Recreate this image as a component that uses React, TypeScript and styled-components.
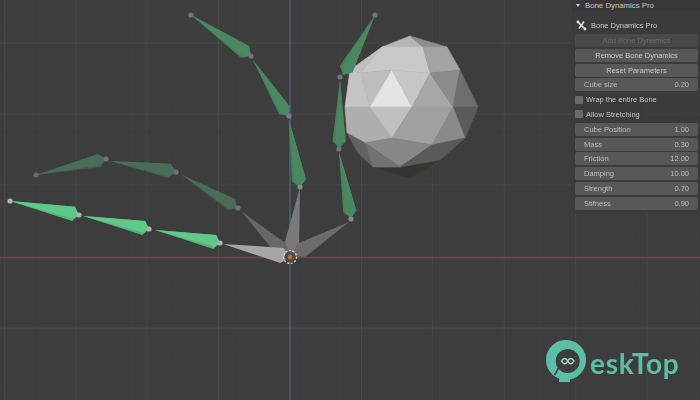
import React from 'react';
import styled, { createGlobalStyle } from 'styled-components';

const GlobalStyle = createGlobalStyle`
  html, body {
    margin: 0;
    padding: 0;
    background: #3d3d3d;
    overflow: hidden;
  }
`;

const Viewport = styled.div`
  position: relative;
  width: 700px;
  height: 400px;
  overflow: hidden;
  background: #3d3d3d;
  font-family: 'Liberation Sans', Arial, sans-serif;
`;

const Scene = styled.svg`
  display: block;
  width: 700px;
  height: 400px;
`;

const SidePanel = styled.aside`
  position: absolute;
  top: 0;
  right: 0;
  width: 129px;
  height: 214px;
  display: flex;
  flex-direction: column;
  background: rgba(58, 58, 58, 0.7);
  color: #c0c0c0;
  font-size: 7.5px;
  filter: blur(0.45px);
`;

const PanelHeader = styled.div`
  display: flex;
  align-items: center;
  gap: 5px;
  height: 11px;
  padding-left: 5px;
  background: #383838;
  color: #c8c8c8;
  font-size: 7.8px;
`;

const Arrow = styled.span`
  width: 0;
  height: 0;
  border-left: 2px solid transparent;
  border-right: 2px solid transparent;
  border-top: 3px solid #cfcfcf;
`;

const PanelBody = styled.div`
  display: flex;
  flex-direction: column;
  padding: 8px 0 0 4px;
`;

const TitleRow = styled.div`
  display: flex;
  align-items: center;
  gap: 4px;
  height: 12px;
  margin: 0 0 3px 1px;
  color: #cbcbcb;
  font-size: 7.5px;
`;

const ActionButton = styled.div<{ $disabled?: boolean }>`
  display: flex;
  align-items: center;
  justify-content: center;
  width: 123px;
  height: 13px;
  margin-bottom: 1.8px;
  border-radius: 2px;
  background: ${({ $disabled }) => ($disabled ? '#484848' : '#585858')};
  color: ${({ $disabled }) => ($disabled ? '#6c6c6c' : '#cacaca')};
`;

const NumberField = styled.div`
  display: flex;
  align-items: center;
  justify-content: space-between;
  box-sizing: border-box;
  width: 123px;
  height: 13px;
  margin-bottom: 1.8px;
  padding: 0 9px;
  border-radius: 2px;
  background: #585858;
  color: #bdbdbd;
`;

const CheckRow = styled.div`
  display: flex;
  align-items: center;
  gap: 3px;
  height: 13px;
  margin-bottom: 1.8px;
  color: #c4c4c4;
`;

const CheckBox = styled.span`
  width: 8px;
  height: 8px;
  border-radius: 1px;
  background: #6a6a6a;
`;

const WatermarkLogo = styled.div`
  position: absolute;
  left: 545px;
  top: 339px;
  display: flex;
  align-items: flex-start;
  color: #5bbfa8;
`;

const LogoMark = styled.svg`
  width: 44px;
  height: 46px;
`;

const LogoText = styled.span`
  margin: 8px 0 0 1px;
  font-family: Lato, 'Open Sans', sans-serif;
  font-size: 28px;
  font-weight: 700;
  letter-spacing: 0.7px;
  line-height: 32px;
  filter: blur(0.3px);
`;

type Bone = {
  from: [number, number];
  to: [number, number];
  width?: number;
  ratio?: number;
};

// kite shape: the widest point sits a fixed way along each bone
const boneShape = ({ from, to, width = 12, ratio = 0.9 }: Bone) => {
  const dx = to[0] - from[0];
  const dy = to[1] - from[1];
  const len = Math.hypot(dx, dy);
  const nx = -dy / len;
  const ny = dx / len;
  const mx = from[0] + dx * ratio;
  const my = from[1] + dy * ratio;
  const half = width * 0.55;
  const a = `${mx + nx * half},${my + ny * half}`;
  const b = `${mx - nx * half},${my - ny * half}`;
  const inner = `${mx + nx * half * 0.7},${my + ny * half * 0.7}`;
  return {
    outline: `${from[0]},${from[1]} ${a} ${to[0]},${to[1]} ${b}`,
    face: `${from[0]},${from[1]} ${inner} ${to[0]},${to[1]} ${b}`,
  };
};

const brightBones: Bone[] = [
  { from: [10, 201], to: [79, 215], width: 13, ratio: 0.92 },
  { from: [83, 216], to: [149, 229], width: 13, ratio: 0.92 },
  { from: [155, 230], to: [220, 243], width: 13, ratio: 0.92 },
];

const fadedBones: Bone[] = [
  { from: [36, 175], to: [106, 159], width: 12 },
  { from: [110, 161], to: [176, 172], width: 13 },
  { from: [182, 175], to: [237, 208], width: 12 },
];

const greenBones: Bone[] = [
  { from: [191, 15], to: [251, 56], width: 13 },
  { from: [253, 60], to: [288, 116], width: 12 },
  { from: [289, 120], to: [300, 187], width: 13 },
  { from: [375, 15], to: [343, 75], width: 13 },
  { from: [340, 80], to: [339, 148], width: 12 },
  { from: [339, 152], to: [351, 218], width: 12 },
];

const rootBones: { bone: Bone; fill: string }[] = [
  { bone: { from: [242, 212], to: [290, 257], width: 13, ratio: 0.8 }, fill: '#686868' },
  { bone: { from: [300, 187], to: [290, 257], width: 13, ratio: 0.8 }, fill: '#7a7a7a' },
  { bone: { from: [349, 222], to: [290, 257], width: 14, ratio: 0.8 }, fill: '#6c6c6c' },
  { bone: { from: [223, 244], to: [290, 257], width: 14, ratio: 0.88 }, fill: '#a6a6a6' },
];

const joints: [number, number, string][] = [
  [10, 201, '#b5b5b5'],
  [79, 215, '#b0b0b0'],
  [149, 229, '#b0b0b0'],
  [220, 243, '#b0b0b0'],
  [36, 175, '#6a6a6a'],
  [106, 159, '#757575'],
  [176, 172, '#757575'],
  [238, 208, '#757575'],
  [191, 15, '#757575'],
  [251, 56, '#757575'],
  [289, 116, '#7c7c7c'],
  [300, 187, '#8a8a8a'],
  [375, 15, '#757575'],
  [340, 77, '#757575'],
  [339, 149, '#757575'],
  [351, 219, '#8a8a8a'],
];

// ico sphere facets
const facets: [string, string][] = [
  ['#363632', '373,167 400,167 440,160 410,178'],
  ['#b5b5b3', '382,47 410,36 423,47'],
  ['#c8c8c8', '382,47 423,47 430,73 392,70 360,73'],
  ['#8d8d8d', '410,36 447,47 423,47'],
  ['#a3a3a3', '423,47 447,47 460,70 430,73'],
  ['#c0c0c0', '350,70 382,47 360,73'],
  ['#bdbdbd', '360,73 392,70 370,107'],
  ['#e4e4e4', '392,70 412,107 370,107'],
  ['#c6c6c6', '392,70 430,73 412,107'],
  ['#a8a8a8', '430,73 453,107 412,107'],
  ['#8c8c8c', '430,73 460,70 453,107'],
  ['#6e6e6e', '460,70 478,107 453,107'],
  ['#c4c4c4', '350,70 360,73 370,107 345,107'],
  ['#aeaeae', '345,107 370,107 392,138 365,143 347,133'],
  ['#c0c0c0', '370,107 412,107 392,138'],
  ['#a0a0a0', '412,107 453,107 432,145 392,138'],
  ['#5a5a5a', '453,107 478,107 465,138'],
  ['#8a8a8a', '453,107 465,138 432,145'],
  ['#878787', '392,138 432,145 400,167 365,143'],
  ['#626262', '347,133 365,143 373,167 358,153'],
  ['#727272', '365,143 400,167 373,167'],
  ['#5c5a57', '432,145 465,138 440,160 400,167'],
];

const gridLines = Array.from({ length: 12 }, (_, i) => 290 + (i - 5) * 71.4);
const rowLines = [43, 114, 185, 328];
const fineX = Array.from({ length: 98 }, (_, i) => i * 7.14 + 4);
const fineY = Array.from({ length: 56 }, (_, i) => i * 7.14);

const fields: [string, string][] = [
  ['Cube Position', '1.00'],
  ['Mass', '0.30'],
  ['Friction', '12.00'],
  ['Damping', '10.00'],
  ['Strength', '0.70'],
  ['Stifness', '0.90'],
];

const App = () => {
  return (
    <>
      <GlobalStyle />
      <Viewport>
        <Scene viewBox="0 0 700 400">
          <defs>
            <filter id="soft" x="-5%" y="-5%" width="110%" height="110%">
              <feGaussianBlur stdDeviation="0.75" />
            </filter>
          </defs>

          <g stroke="#3f3f3f" strokeWidth="1">
            {fineX.map((x) => (
              <line key={`fx${x}`} x1={x} y1="0" x2={x} y2="400" />
            ))}
            {fineY.map((y) => (
              <line key={`fy${y}`} x1="0" y1={y} x2="700" y2={y} />
            ))}
          </g>
          <g stroke="#484848" strokeWidth="1">
            {gridLines.map((x) => (
              <line key={x} x1={x} y1="0" x2={x} y2="400" />
            ))}
            {rowLines.map((y) => (
              <line key={y} x1="0" y1={y} x2="700" y2={y} />
            ))}
          </g>
          <line x1="0" y1="257.5" x2="700" y2="257.5" stroke="#8a3d46" strokeWidth="1.5" />
          <line x1="290" y1="0" x2="290" y2="400" stroke="#48658a" strokeWidth="1.3" />

          <g filter="url(#soft)">
            {facets.map(([fill, points]) => (
              <polygon key={points} points={points} fill={fill} stroke={fill} strokeWidth="0.6" />
            ))}

            {rootBones.map(({ bone, fill }) => (
              <polygon key={fill} points={boneShape(bone).outline} fill={fill} />
            ))}

            {fadedBones.map((bone) => {
              const s = boneShape(bone);
              return (
                <g key={s.outline}>
                  <polygon points={s.outline} fill="#436350" />
                  <polygon points={s.face} fill="#4a6d58" />
                </g>
              );
            })}
            {greenBones.map((bone) => {
              const s = boneShape(bone);
              return (
                <g key={s.outline}>
                  <polygon points={s.outline} fill="#437f5b" />
                  <polygon points={s.face} fill="#4b8862" />
                </g>
              );
            })}
            {brightBones.map((bone) => {
              const s = boneShape(bone);
              return (
                <g key={s.outline}>
                  <polygon points={s.outline} fill="#50b277" />
                  <polygon points={s.face} fill="#60c988" />
                </g>
              );
            })}
            {joints.map(([cx, cy, fill]) => (
              <circle key={`${cx}-${cy}`} cx={cx} cy={cy} r="2.6" fill={fill} />
            ))}

            <circle cx="290" cy="257" r="5.5" fill="#55483f" />
            <circle cx="290" cy="257" r="6.5" fill="none" stroke="#e6e0da" strokeWidth="1.2" strokeDasharray="2 1.6" />
            <circle cx="290" cy="257" r="2.4" fill="#b86a3c" />
          </g>
        </Scene>

        <SidePanel>
          <PanelHeader>
            <Arrow />
            Bone Dynamics Pro
          </PanelHeader>
          <PanelBody>
            <TitleRow>
              <svg width="11" height="11" viewBox="0 0 11 11">
                <path d="M2 2 L9 9 M8 1.5 L3 8.5" stroke="#e2e2e2" strokeWidth="1.6" fill="none" />
                <circle cx="2" cy="2" r="1.4" fill="#e2e2e2" />
                <circle cx="9" cy="9" r="1.4" fill="#e2e2e2" />
              </svg>
              Bone Dynamics Pro
            </TitleRow>
            <ActionButton $disabled>Add Bone Dynamics</ActionButton>
            <ActionButton>Remove Bone Dynamics</ActionButton>
            <ActionButton>Reset Parameters</ActionButton>
            <NumberField>
              <span>Cube size</span>
              <span>0.20</span>
            </NumberField>
            <CheckRow>
              <CheckBox />
              Wrap the entire Bone
            </CheckRow>
            <CheckRow>
              <CheckBox />
              Allow Stretching
            </CheckRow>
            {fields.map(([label, value]) => (
              <NumberField key={label}>
                <span>{label}</span>
                <span>{value}</span>
              </NumberField>
            ))}
          </PanelBody>
        </SidePanel>

        <WatermarkLogo>
          <LogoMark viewBox="0 0 44 46">
            <path
              fillRule="evenodd"
              d="M1 21 A20 20 0 1 1 25 40.6 L25 43 L14 43 L14 39.6 A20 20 0 0 1 1 21 Z M10.7 22 A12 12 0 1 0 34.7 22 A12 12 0 1 0 10.7 22 Z"
              fill="#5bbfa8"
            />
            <path d="M13.5 29 L9.5 36" stroke="#3d3d3d" strokeWidth="1.6" />
            <path
              d="M16.5 22 C18.5 18.5 21 18.5 22.7 22 C24.4 25.5 27 25.5 29 22 C27 18.5 24.4 18.5 22.7 22 C21 25.5 18.5 25.5 16.5 22 Z"
              fill="none"
              stroke="#9fdccf"
              strokeWidth="1.5"
            />
          </LogoMark>
          <LogoText>eskTop</LogoText>
        </WatermarkLogo>
      </Viewport>
    </>
  );
};

export default App;
